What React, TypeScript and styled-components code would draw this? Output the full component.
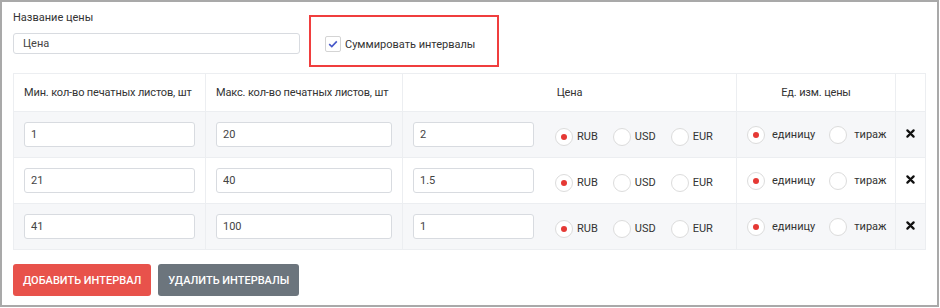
import React from "react";
import styled, { createGlobalStyle } from "styled-components";

const Global = createGlobalStyle`
  html, body { margin: 0; padding: 0; background: #fff; }
  body { font-family: Roboto, "Noto Sans", Arial, sans-serif; color: #333; }
  * { box-sizing: border-box; }
`;

const Frame = styled.div`
  width: 939px;
  height: 307px;
  border: 2px solid #a9a9a9;
  padding: 8px 11px 0 11px;
  background: #fff;
`;

const TopRow = styled.div`
  display: flex;
  align-items: flex-start;
  height: 57px;
`;

const NameGroup = styled.div`
  display: flex;
  flex-direction: column;
  width: 287px;
`;

const Label = styled.div`
  font-size: 11px;
  line-height: 16px;
  color: #333;
  margin-bottom: 7px;
`;

const TextInput = styled.input<{ $w?: number; $h?: number; $pad?: number }>`
  width: ${(p) => (p.$w ? `${p.$w}px` : "100%")};
  height: ${(p) => p.$h ?? 25}px;
  border: 1px solid #d8dbe0;
  border-radius: 3px;
  padding: 0 ${(p) => p.$pad ?? 6}px;
  font-family: Roboto, Arial, sans-serif;
  font-size: 11px;
  color: #444;
  background: #fff;
  outline: none;
`;

const Highlight = styled.div`
  margin-left: 9px;
  margin-top: 5px;
  width: 190px;
  height: 52px;
  border: 2px solid #f03e3e;
  display: flex;
  align-items: center;
  padding: 6px 0 0 14px;
  gap: 4px;
  font-size: 11px;
  color: #333;
`;

const CheckBox = styled.span`
  width: 16px;
  height: 16px;
  border: 1px solid #d4d4d4;
  border-radius: 2px;
  display: inline-flex;
  align-items: center;
  justify-content: center;
  background: #fff;
`;

const Table = styled.table`
  margin-top: 6px;
  width: 912px;
  border-collapse: collapse;
  table-layout: fixed;
  font-size: 11px;
`;

const Th = styled.th<{ $align?: string }>`
  height: 38px;
  border: 1px solid #eceef1;
  font-weight: 400;
  color: #333;
  text-align: ${(p) => p.$align ?? "left"};
  padding: 0 10px;
  white-space: nowrap;
  letter-spacing: -0.15px;
`;

const Tr = styled.tr<{ $shade: boolean }>`
  background: ${(p) => (p.$shade ? "#f6f7f9" : "#fff")};
`;

const Td = styled.td<{ $center?: boolean }>`
  height: 46px;
  border: 1px solid #eceef1;
  padding: 0 10px;
  text-align: ${(p) => (p.$center ? "center" : "left")};
  vertical-align: middle;
`;

const PriceCell = styled.div`
  display: flex;
  align-items: center;
`;

const RadioGroup = styled.div<{ $shift?: number; $gap: number }>`
  display: flex;
  align-items: center;
  gap: ${(p) => p.$gap}px;
  margin-left: ${(p) => p.$shift ?? 0}px;
  margin-top: ${(p) => (p.$shift ? 4 : 0)}px;
`;

const RadioItem = styled.label<{ $textGap: number }>`
  display: inline-flex;
  align-items: center;
  gap: ${(p) => p.$textGap}px;
  font-size: 11px;
  color: #333;
`;

const Circle = styled.span<{ $on: boolean }>`
  width: 18px;
  height: 18px;
  border-radius: 50%;
  border: 1px solid #dcdcdc;
  background: #fff;
  display: inline-flex;
  align-items: center;
  justify-content: center;
  &::after {
    content: "";
    width: 6px;
    height: 6px;
    border-radius: 50%;
    background: ${(p) => (p.$on ? "#e53935" : "transparent")};
  }
`;

const Buttons = styled.div`
  display: flex;
  gap: 7px;
  margin-top: 14px;
`;

const Button = styled.button<{ $variant: "red" | "gray" }>`
  height: 32px;
  padding: 0 10px;
  border: none;
  border-radius: 3px;
  background: ${(p) => (p.$variant === "red" ? "#e8524b" : "#6c757d")};
  color: #fff;
  font-family: Roboto, Arial, sans-serif;
  font-size: 11px;
  font-weight: 500;
  text-transform: uppercase;
`;

const Check = () => (
  <svg width="10" height="8" viewBox="0 0 10 8">
    <path d="M1.2 4.2 L3.8 6.6 L8.8 1.4" fill="none" stroke="#4657c9" strokeWidth="1.6" />
  </svg>
);

const Cross = () => (
  <svg width="9" height="9" viewBox="0 0 9 9">
    <path d="M1.4 1.4 L7.6 7.6 M7.6 1.4 L1.4 7.6" stroke="#111" strokeWidth="2.2" strokeLinecap="round" />
  </svg>
);

const rows = [
  { min: "1", max: "20", price: "2" },
  { min: "21", max: "40", price: "1.5" },
  { min: "41", max: "100", price: "1" },
];

export default function App() {
  return (
    <>
      <Global />
      <Frame>
        <TopRow>
          <NameGroup>
            <Label>Название цены</Label>
            <TextInput $h={21} $pad={9} defaultValue="Цена" />
          </NameGroup>
          <Highlight>
            <CheckBox>
              <Check />
            </CheckBox>
            <span>Суммировать интервалы</span>
          </Highlight>
        </TopRow>
        <Table>
          <colgroup>
            <col style={{ width: 192 }} />
            <col style={{ width: 197 }} />
            <col style={{ width: 334 }} />
            <col style={{ width: 159 }} />
            <col style={{ width: 30 }} />
          </colgroup>
          <thead>
            <tr>
              <Th>Мин. кол-во печатных листов, шт</Th>
              <Th>Макс. кол-во печатных листов, шт</Th>
              <Th $align="center">Цена</Th>
              <Th $align="center">Ед. изм. цены</Th>
              <Th />
            </tr>
          </thead>
          <tbody>
            {rows.map((r, i) => (
              <Tr key={i} $shade={i % 2 === 0}>
                <Td>
                  <TextInput defaultValue={r.min} />
                </Td>
                <Td>
                  <TextInput defaultValue={r.max} />
                </Td>
                <Td>
                  <PriceCell>
                    <TextInput $w={121} defaultValue={r.price} />
                    <RadioGroup $shift={21} $gap={15}>
                      <RadioItem $textGap={4}>
                        <Circle $on />
                        RUB
                      </RadioItem>
                      <RadioItem $textGap={4}>
                        <Circle $on={false} />
                        USD
                      </RadioItem>
                      <RadioItem $textGap={4}>
                        <Circle $on={false} />
                        EUR
                      </RadioItem>
                    </RadioGroup>
                  </PriceCell>
                </Td>
                <Td>
                  <RadioGroup $gap={14}>
                    <RadioItem $textGap={7}>
                      <Circle $on />
                      единицу
                    </RadioItem>
                    <RadioItem $textGap={7}>
                      <Circle $on={false} />
                      тираж
                    </RadioItem>
                  </RadioGroup>
                </Td>
                <Td $center>
                  <Cross />
                </Td>
              </Tr>
            ))}
          </tbody>
        </Table>
        <Buttons>
          <Button $variant="red">Добавить интервал</Button>
          <Button $variant="gray">Удалить интервалы</Button>
        </Buttons>
      </Frame>
    </>
  );
}
